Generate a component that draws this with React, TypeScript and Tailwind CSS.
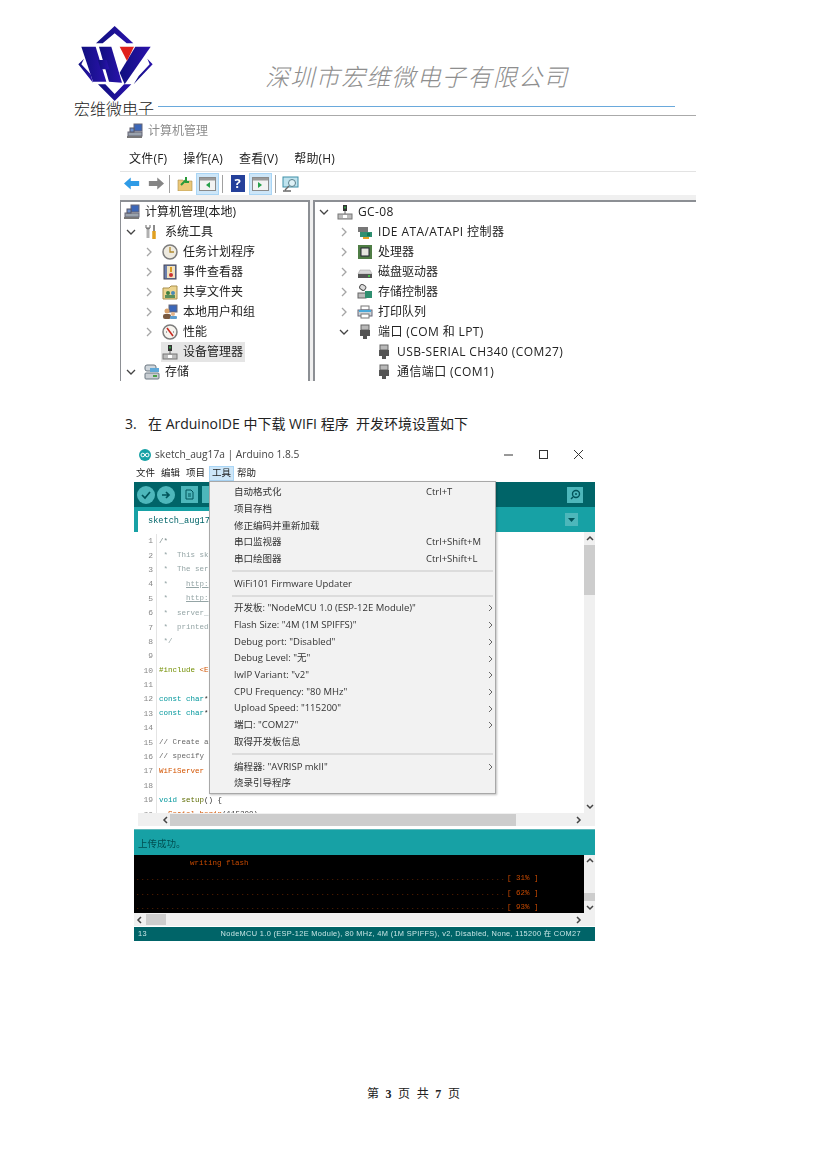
import React from "react";

const cjk = '"Noto Sans CJK SC", "Noto Sans", sans-serif';
const ui = '"Open Sans", "Noto Sans CJK SC", sans-serif';
const mono = '"Liberation Mono", "Noto Sans CJK SC", monospace';

function Logo() {
  return (
    <svg width="75" height="75" viewBox="40 20 225 225" className="block">
      <defs>
        <linearGradient id="lg" x1="0" x2="1" y1="0" y2="0">
          <stop offset="0" stopColor="#10107f" />
          <stop offset="1" stopColor="#2a12ab" />
        </linearGradient>
      </defs>
      <g fill="url(#lg)">
        <polygon points="150,20 206,72 186,72 150,42 114,72 94,72" />
        <polygon points="50,82 93,82 125,187 85,187" />
        <polygon points="103,82 140,82 172,190 133,187" />
        <polygon points="100,122 126,122 134,150 108,150" />
        <polygon points="212,82 258,82 180,195 165,160" />
        <polygon points="58,118 41,135 85,190 78,165 50,135" />
        <polygon points="248,118 264,135 207,195 222,170 255,135" />
        <polygon points="100,195 122,195 150,224 178,195 200,195 150,245" />
      </g>
      <polygon points="165,82 208,82 187,125" fill="#e0201c" />
    </svg>
  );
}

const Chev = ({ open }: { open?: boolean }) => (
  <svg width="10" height="10" viewBox="0 0 10 10" className="shrink-0">
    {open ? (
      <path d="M1 3 L5 7 L9 3" fill="none" stroke="#444" strokeWidth="1.3" />
    ) : (
      <path d="M3 1 L7 5 L3 9" fill="none" stroke="#a6a6a6" strokeWidth="1.3" />
    )}
  </svg>
);

type IconName = "pc" | "tools" | "clock" | "event" | "share" | "users" | "perf" | "dev" | "store" | "ide" | "cpu" | "disk" | "ctrl" | "print" | "port";

function Ico({ n }: { n: IconName }) {
  const p: Record<IconName, React.ReactNode> = {
    pc: (<><rect x="7" y="1" width="8" height="7" fill="#3b66b8" stroke="#667" /><rect x="1" y="9" width="14" height="4" fill="#9aa3ad" stroke="#667" /><rect x="3" y="5" width="4" height="4" fill="#6d8fc9" stroke="#556" /><rect x="0" y="13" width="15" height="2" fill="#777" /></>),
    tools: (<><path d="M4 3 v11" stroke="#b0b0b0" strokeWidth="3" /><path d="M2 1 v3 l2 1 2-1 v-3" stroke="#666" fill="none" /><path d="M10 1 v6" stroke="#8a8a8a" strokeWidth="2" /><path d="M10 7 v8" stroke="#e0a020" strokeWidth="3.5" /></>),
    clock: (<><circle cx="8" cy="8" r="7" fill="#eeeadf" stroke="#7c7c7c" strokeWidth="1.5" /><path d="M8 3 v5 h4" stroke="#b08a30" strokeWidth="1.3" fill="none" /></>),
    event: (<><rect x="2" y="1" width="12" height="14" fill="#6b7fae" stroke="#445" /><rect x="5" y="2" width="8" height="12" fill="#f2e3c0" /><path d="M9 3 v5" stroke="#d89a20" strokeWidth="2" /><circle cx="9" cy="11" r="2" fill="#c33" /></>),
    share: (<><path d="M1 4 h6 l2 -2 h6 v13 h-14 z" fill="#ecd48e" stroke="#a98f4c" /><circle cx="6" cy="9" r="2" fill="#3f7f3f" /><circle cx="11" cy="9" r="2" fill="#4a8ab8" /><rect x="3" y="11" width="10" height="3" fill="#5a8f5a" /></>),
    users: (<><rect x="7" y="1" width="8" height="7" fill="#3b66b8" stroke="#667" /><circle cx="5" cy="7" r="2.5" fill="#d8a26c" /><rect x="1" y="10" width="8" height="5" rx="2" fill="#7a5a40" /><circle cx="11" cy="10" r="2" fill="#e2b48c" /><rect x="8" y="12" width="7" height="3" rx="1" fill="#5d9ed0" /></>),
    perf: (<><circle cx="8" cy="8" r="7" fill="#f5f3ee" stroke="#7c7c7c" strokeWidth="1.5" /><path d="M5 4 L11 12" stroke="#c8281e" strokeWidth="1.6" /><path d="M4 8 h1 M11 8 h1" stroke="#555" /></>),
    dev: (<><rect x="6" y="1" width="4" height="6" fill="#333" /><rect x="7" y="2.5" width="2" height="2" fill="#3a9a4a" /><path d="M8 7 v3" stroke="#666" /><rect x="1" y="10" width="14" height="5" fill="#bdbdbd" stroke="#777" /><rect x="6" y="11" width="4" height="3" fill="#fff" /></>),
    store: (<><rect x="1" y="1" width="11" height="6" rx="2" fill="#cfd6dc" stroke="#6b7680" /><rect x="6" y="4" width="9" height="4" fill="#5fa8d8" /><rect x="1" y="9" width="14" height="6" rx="1" fill="#c9ced3" stroke="#6b7680" /><rect x="9" y="11" width="4" height="2" fill="#4aa04a" /></>),
    ide: (<><rect x="1" y="3" width="10" height="5" fill="#777" /><rect x="3" y="8" width="12" height="5" fill="#2f8f70" /><rect x="10" y="9" width="3" height="3" fill="#175" /><rect x="6" y="13" width="6" height="2" fill="#e6a020" /></>),
    cpu: (<><rect x="1" y="1" width="14" height="14" fill="#4f7d45" /><rect x="4" y="4" width="8" height="8" fill="#e6e6e0" stroke="#223" /></>),
    disk: (<><path d="M3 6 h10 l2 4 h-14 z" fill="#d8d8d8" stroke="#999" strokeWidth=".5" /><rect x="1" y="10" width="14" height="4" fill="#555" /><rect x="11" y="11" width="2" height="2" fill="#4ac04a" /></>),
    ctrl: (<><rect x="3" y="1" width="6" height="5" rx="2" fill="#ddd" stroke="#555" transform="rotate(35 6 3)" /><rect x="1" y="9" width="8" height="5" fill="#bbb" stroke="#666" /><rect x="8" y="7" width="7" height="7" fill="#2f8f70" /></>),
    print: (<><rect x="4" y="2" width="8" height="4" fill="#fff" stroke="#777" /><rect x="1" y="6" width="14" height="6" fill="#cfd4d8" stroke="#667" /><rect x="2" y="6" width="12" height="2" fill="#4aa8d8" /><rect x="4" y="10" width="8" height="4" fill="#fff" stroke="#777" /></>),
    port: (<><rect x="4" y="1" width="8" height="5" fill="#b8b8b8" stroke="#666" /><rect x="3" y="6" width="10" height="6" fill="#555" /><rect x="6" y="12" width="4" height="3" fill="#555" /></>),
  };
  return <svg width="16" height="16" viewBox="0 0 16 16" className="shrink-0">{p[n]}</svg>;
}

function TreeRow({ ind, chev, icon, label, sel, wide, root }: { ind: number; chev?: "o" | "c"; icon: IconName; label: string; sel?: boolean; wide?: boolean; root?: boolean }) {
  return (
    <div className="flex h-[20px] items-center" style={{ paddingLeft: ind }}>
      {!root && <span className="flex w-[12px] shrink-0 items-center justify-center">{chev && <Chev open={chev === "o"} />}</span>}
      <span className={`flex h-[20px] items-center pl-[1px] pr-[2px] ${root ? "" : "ml-[6px]"} ${sel ? "bg-[#e5e5e5]" : ""}`}>
        <Ico n={icon} />
        <span className={`ml-[5px] whitespace-nowrap text-[12px] text-[#222] ${wide ? "tracking-[0.4px]" : ""}`}>{label}</span>
      </span>
    </div>
  );
}

const ToolBtn = ({ children, hot }: { children: React.ReactNode; hot?: boolean }) => (
  <span className={`flex h-[22px] w-[23px] items-center justify-center ${hot ? "border border-[#a9d5f5] bg-[#cde6f8]" : ""}`}>{children}</span>
);
const Sep = () => <span className="mx-[3px] h-[18px] w-px bg-[#a0a0a0]" />;
const Win = ({ mark }: { mark: string }) => (
  <svg width="17" height="16" viewBox="0 0 17 16">
    <rect x=".5" y="1.5" width="16" height="13" fill="#f3f3f3" stroke="#8a8a8a" />
    <rect x="1" y="2" width="15" height="2.5" fill="#9a9a9a" />
    <path d={mark} fill="#27a04a" />
  </svg>
);

function Computer() {
  return (
    <div className="ml-[120px] h-[266px] w-[576px] overflow-hidden border-t border-[#aaaaaa] bg-white blur-[0.4px]" style={{ fontFamily: ui }}>
      <div className="flex h-[30px] items-center pl-[7px]">
        <Ico n="pc" />
        <span className="ml-[5px] text-[12px] text-[#8c8c8c]">计算机管理</span>
      </div>
      <div className="flex h-[25px] items-center gap-[16px] pl-[9px] text-[12px] tracking-[0.2px] text-[#222]">
        <span>文件(F)</span><span>操作(A)</span><span>查看(V)</span><span>帮助(H)</span>
      </div>
      <div className="flex h-[24px] items-center border-t border-[#e3e3e3] pl-[3px]">
        <svg width="16" height="13" viewBox="0 0 19 14" className="ml-[1px]"><path d="M0 7 L8 0 V4 H18 V10 H8 V14 Z" fill="#2f9be6" /></svg>
        <svg width="16" height="13" viewBox="0 0 19 14" className="ml-[8px]"><path d="M19 7 L11 0 V4 H1 V10 H11 V14 Z" fill="#858585" /></svg>
        <span className="ml-[2px] flex items-center"><Sep /></span>
        <ToolBtn>
          <svg width="16" height="14" viewBox="0 0 16 14"><path d="M1 3 h5 l1 1 h8 v10 h-14 z" fill="#ecc878" stroke="#a98f4c" strokeWidth=".6" /><path d="M4 8 L9 3 M9 0 V5 H12" stroke="#2a9a3a" strokeWidth="2" fill="none" /></svg>
        </ToolBtn>
        <ToolBtn hot><Win mark="M11 6 V12 L7 9 Z" /></ToolBtn>
        <Sep />
        <ToolBtn>
          <span className="flex h-[17px] w-[14px] items-center justify-center bg-[#24409a] text-[13px] font-bold leading-none text-white">?</span>
        </ToolBtn>
        <ToolBtn hot><Win mark="M6 6 V12 L10 9 Z" /></ToolBtn>
        <Sep />
        <ToolBtn>
          <svg width="17" height="16" viewBox="0 0 17 16"><rect x="1" y="1" width="15" height="10" fill="#bfe3ee" stroke="#3f8fa8" /><circle cx="10" cy="7" r="3.5" fill="#dff2f7" stroke="#5b7f8a" /><path d="M7 10 L3 14 M1 15 H9" stroke="#6a6a6a" strokeWidth="1.4" /></svg>
        </ToolBtn>
      </div>
      <div className="h-[5px] bg-[#f0f0f0]" />
      <div className="flex h-[181px] bg-[#f0f0f0]">
        <div className="-ml-[1px] h-[190px] w-[191px] border-2 border-[#8c8f94] bg-white">
          <TreeRow ind={2} root icon="pc" label="计算机管理(本地)" />
          <TreeRow ind={4} chev="o" icon="tools" label="系统工具" />
          <TreeRow ind={22} chev="c" icon="clock" label="任务计划程序" />
          <TreeRow ind={22} chev="c" icon="event" label="事件查看器" />
          <TreeRow ind={22} chev="c" icon="share" label="共享文件夹" />
          <TreeRow ind={22} chev="c" icon="users" label="本地用户和组" />
          <TreeRow ind={22} chev="c" icon="perf" label="性能" />
          <TreeRow ind={22} icon="dev" label="设备管理器" sel />
          <TreeRow ind={4} chev="o" icon="store" label="存储" />
        </div>
        <div className="ml-[3px] h-[190px] flex-1 border-t-2 border-l-2 border-[#8c8f94] bg-white">
          <TreeRow ind={3} chev="o" icon="dev" label="GC-08" wide />
          <TreeRow ind={23} chev="c" icon="ide" label="IDE ATA/ATAPI 控制器" wide />
          <TreeRow ind={23} chev="c" icon="cpu" label="处理器" />
          <TreeRow ind={23} chev="c" icon="disk" label="磁盘驱动器" />
          <TreeRow ind={23} chev="c" icon="ctrl" label="存储控制器" />
          <TreeRow ind={23} chev="c" icon="print" label="打印队列" />
          <TreeRow ind={23} chev="o" icon="port" label="端口 (COM 和 LPT)" wide />
          <TreeRow ind={42} icon="port" label="USB-SERIAL CH340 (COM27)" wide />
          <TreeRow ind={42} icon="port" label="通信端口 (COM1)" wide />
        </div>
      </div>
    </div>
  );
}

const code: [string, React.ReactNode][] = [
  ["1", <span className="text-[#7a8a8a]">{"/*"}</span>],
  ["2", <span className="text-[#95a5a6]">{" *  This sk"}</span>],
  ["3", <span className="text-[#95a5a6]">{" *  The ser"}</span>],
  ["4", <span className="text-[#95a5a6]">{" *    "}<u>http:</u></span>],
  ["5", <span className="text-[#95a5a6]">{" *    "}<u>http:</u></span>],
  ["6", <span className="text-[#95a5a6]">{" *  server_"}</span>],
  ["7", <span className="text-[#95a5a6]">{" *  printed"}</span>],
  ["8", <span className="text-[#95a5a6]">{" */"}</span>],
  ["9", ""],
  ["10", <span className="text-[#728e00]">#include <span className="text-[#d35400]">&lt;E</span></span>],
  ["11", ""],
  ["12", <span className="text-[#00979c]">const char<span className="text-[#333]">*</span></span>],
  ["13", <span className="text-[#00979c]">const char<span className="text-[#333]">*</span></span>],
  ["14", ""],
  ["15", <span className="text-[#666]">{"// Create a"}</span>],
  ["16", <span className="text-[#666]">{"// specify "}</span>],
  ["17", <span className="text-[#d35400]">WiFiServer</span>],
  ["18", ""],
  ["19", <span className="text-[#00979c]">{"void "}<span className="text-[#5e6d03]">setup</span><span className="text-[#333]">{"() {"}</span></span>],
  ["20", <span className="text-[#d35400]">{"  Serial.begin"}<span className="text-[#333]">(115200)</span></span>],
];

const menu: ({ t: string; k?: string; a?: boolean } | "sep")[] = [
  { t: "自动格式化", k: "Ctrl+T" },
  { t: "项目存档" },
  { t: "修正编码并重新加载" },
  { t: "串口监视器", k: "Ctrl+Shift+M" },
  { t: "串口绘图器", k: "Ctrl+Shift+L" },
  "sep",
  { t: "WiFi101 Firmware Updater" },
  "sep",
  { t: '开发板: "NodeMCU 1.0 (ESP-12E Module)"', a: true },
  { t: 'Flash Size: "4M (1M SPIFFS)"', a: true },
  { t: 'Debug port: "Disabled"', a: true },
  { t: 'Debug Level: "无"', a: true },
  { t: 'lwIP Variant: "v2"', a: true },
  { t: 'CPU Frequency: "80 MHz"', a: true },
  { t: 'Upload Speed: "115200"', a: true },
  { t: '端口: "COM27"', a: true },
  { t: "取得开发板信息" },
  "sep",
  { t: '编程器: "AVRISP mkII"', a: true },
  { t: "烧录引导程序" },
];

function ToolsMenu() {
  return (
    <div className="absolute left-[75px] top-[35px] h-[313px] w-[287px] border border-[#a8a8a8] bg-[#f2f2f2] pl-[23px] pt-[2px] text-[9.5px] text-[#333] shadow-[1px_1px_2px_rgba(0,0,0,0.25)]">
      {menu.map((m, i) =>
        m === "sep" ? (
          <div key={i} className="-ml-[1px] my-[3px] mr-[2px] h-[2px] bg-[#dcdcdc]" />
        ) : (
          <div key={i} className="flex h-[16.7px] items-center pl-[1px]">
            <span className="whitespace-nowrap">{m.t}</span>
            {m.k && <span className="absolute left-[216px] whitespace-nowrap">{m.k}</span>}
            {m.a && (
              <svg width="6" height="8" viewBox="0 0 6 8" className="absolute left-[278px]"><path d="M1 1 L4 4 L1 7" fill="none" stroke="#666" strokeWidth="1" /></svg>
            )}
          </div>
        )
      )}
    </div>
  );
}

const ScrollArrow = ({ d }: { d: "u" | "d" | "l" | "r" }) => {
  const path = { u: "M1 5 L4 2 L7 5", d: "M1 3 L4 6 L7 3", l: "M5 1 L2 4 L5 7", r: "M3 1 L6 4 L3 7" }[d];
  return <svg width="8" height="8" viewBox="0 0 8 8" className="shrink-0"><path d={path} fill="none" stroke="#444" strokeWidth="1.5" /></svg>;
};

function Arduino() {
  return (
    <div className="relative ml-[134px] h-[495px] w-[461px] bg-white blur-[0.4px]" style={{ fontFamily: ui }}>
      <div className="flex h-[18px] items-center pl-[5px]">
        <svg width="12" height="12" viewBox="0 0 12 12"><circle cx="6" cy="6" r="6" fill="#17a1a5" /><circle cx="3.8" cy="6" r="1.8" fill="none" stroke="#fff" /><circle cx="8.2" cy="6" r="1.8" fill="none" stroke="#fff" /></svg>
        <span className="ml-[4px] text-[10.2px] text-[#444]">sketch_aug17a | Arduino 1.8.5</span>
        <svg width="80" height="12" viewBox="0 0 80 12" className="ml-auto mr-[11px]"><path d="M0 6 H9" stroke="#333" /><rect x="35.5" y="1.5" width="8" height="8" fill="none" stroke="#333" /><path d="M70 1 L79 10 M79 1 L70 10" stroke="#333" /></svg>
      </div>
      <div className="flex h-[18px] items-center pl-[2px] text-[9.5px] text-[#222]">
        <span className="w-[25px]">文件</span>
        <span className="w-[25px]">编辑</span>
        <span className="w-[23px]">项目</span>
        <span className="flex h-[15px] w-[25px] items-center justify-center border border-[#a9d5f5] bg-[#cde6f8]">工具</span>
        <span className="ml-[3px]">帮助</span>
      </div>
      <div className="flex h-[25px] items-center bg-[#006468] pl-[3px]">
        <span className="flex h-[18px] w-[18px] items-center justify-center rounded-full bg-[#4db7bb]"><svg width="10" height="10" viewBox="0 0 10 10"><path d="M1 5 L4 8 L9 2" fill="none" stroke="#00545a" strokeWidth="1.7" /></svg></span>
        <span className="ml-[2px] flex h-[18px] w-[18px] items-center justify-center rounded-full bg-[#4db7bb]"><svg width="10" height="10" viewBox="0 0 10 10"><path d="M1 5 H8 M5 2 L8 5 L5 8" fill="none" stroke="#00545a" strokeWidth="1.7" /></svg></span>
        <span className="ml-[6px] flex h-[17px] w-[17px] items-center justify-center bg-[#4db7bb]"><svg width="9" height="11" viewBox="0 0 9 11"><path d="M1 1 H6 L8 3 V10 H1 Z M3 5 H6 M3 7 H6" fill="none" stroke="#00545a" /></svg></span>
        <span className="ml-[4px] h-[17px] w-[17px] bg-[#4db7bb]" />
        <span className="ml-auto mr-[12px] flex h-[16px] w-[16px] items-center justify-center bg-[#4db7bb]"><svg width="11" height="11" viewBox="0 0 11 11"><circle cx="6" cy="5" r="3.5" fill="none" stroke="#00545a" strokeWidth="1.4" /><circle cx="6" cy="5" r="1" fill="#00545a" /><path d="M3 8 L1 10" stroke="#00545a" strokeWidth="1.4" /></svg></span>
      </div>
      <div className="flex h-[25px] items-end bg-[#17a1a5] pl-[4px]">
        <div className="flex h-[21px] w-[85px] items-center bg-white pl-[10px] text-[8.6px] text-[#006468]" style={{ fontFamily: mono }}>sketch_aug17a</div>
        <span className="mb-[6px] ml-auto mr-[17px] flex h-[13px] w-[13px] items-center justify-center bg-[#4db7bb]"><svg width="7" height="4" viewBox="0 0 7 4"><path d="M0 0 H7 L3.5 4 Z" fill="#00545a" /></svg></span>
      </div>
      <div className="flex h-[281px] overflow-hidden">
        <div className="flex-1 overflow-hidden pt-[2px]" style={{ fontFamily: mono }}>
          {code.map(([n, c]) => (
            <div key={n} className="flex h-[14.4px] items-center text-[7.5px]">
              <span className="w-[19px] shrink-0 text-right text-[8px] text-[#888]">{n}</span>
              <span className="ml-[3px] h-[14.4px] w-px shrink-0 bg-[#e4e4e4]" />
              <span className="ml-[2px] whitespace-pre">{c}</span>
            </div>
          ))}
        </div>
        <div className="flex w-[11px] flex-col items-center bg-[#f0f0f0] pt-[3px]">
          <ScrollArrow d="u" />
          <div className="mt-[2px] h-[50px] w-[11px] bg-[#cdcdcd]" />
          <div className="mt-auto mb-[3px]"><ScrollArrow d="d" /></div>
        </div>
      </div>
      <div className="ml-[4px] flex h-[13px] items-center bg-[#f0f0f0] pl-[24px] pr-[13px]">
        <ScrollArrow d="l" />
        <div className="h-[12px] w-[346px] bg-[#cdcdcd]" />
        <span className="ml-auto"><ScrollArrow d="r" /></span>
      </div>
      <div className="mt-[3px] flex h-[26px] items-center border-t border-[#5fb8ba] bg-[#17a1a5] pl-[4px] pt-[3px] text-[9.5px] text-[#004f52]">上传成功。</div>
      <div className="flex h-[58px]">
        <div className="w-[450px] overflow-hidden bg-black pt-[1px] text-[7.5px] text-[#c84a00]" style={{ fontFamily: mono }}>
          <div className="h-[14px] whitespace-pre pl-[56px] leading-[14px]">writing flash</div>
          {["31", "62", "93"].map((v) => (
            <div key={v} className="flex h-[14.4px] items-end pl-[2px]">
              <span className="w-[371px] overflow-hidden whitespace-nowrap text-[6px] leading-[10px] tracking-[1.4px] text-[#a83c00]">{".".repeat(74)}</span>
              <span className="whitespace-pre">{`[ ${v}% ]`}</span>
            </div>
          ))}
        </div>
        <div className="flex w-[11px] flex-col items-center bg-[#f0f0f0] pt-[2px]">
          <ScrollArrow d="u" />
          <div className="mt-[28px] h-[8px] w-[11px] bg-[#cdcdcd]" />
          <div className="mt-auto mb-[2px]"><ScrollArrow d="d" /></div>
        </div>
      </div>
      <div className="flex h-[13px] items-center bg-[#f0f0f0] pl-[2px] pr-[13px]">
        <ScrollArrow d="l" />
        <div className="ml-[2px] h-[11px] w-[20px] bg-[#cdcdcd]" />
        <span className="ml-auto"><ScrollArrow d="r" /></span>
      </div>
      <div className="mt-[1px] flex h-[14px] items-center justify-between bg-[#006468] pl-[4px] pr-[14px] text-[7.4px] tracking-[0.33px] text-[#c8e6e6]" style={{ fontFamily: '"Liberation Sans", "Noto Sans CJK SC", sans-serif' }}>
        <span>13</span>
        <span className="whitespace-nowrap">NodeMCU 1.0 (ESP-12E Module), 80 MHz, 4M (1M SPIFFS), v2, Disabled, None, 115200 在 COM27</span>
      </div>
      <ToolsMenu />
    </div>
  );
}

export default function App() {
  return (
    <div className="h-[1169px] w-[827px] overflow-hidden bg-white" style={{ fontFamily: cjk }}>
      <header className="flex h-[115px] pl-[74px]">
        <div className="w-[84px] pt-[26px]">
          <div className="ml-[4px]"><Logo /></div>
          <div className="-mt-[1px] whitespace-nowrap text-[16px] font-light leading-[16px] text-[#222]">宏维微电子</div>
        </div>
        <div className="pt-[61px]">
          <div className="ml-[107px] h-[29px] whitespace-nowrap text-[24px] font-light italic leading-[29px] tracking-[1.3px] text-[#8e8e8e]">深圳市宏维微电子有限公司</div>
          <div className="mt-[16px] h-px w-[517px] bg-[#6aa9dc]" />
        </div>
      </header>
      <Computer />
      <p className="ml-[125px] mt-[33px] h-[20px] whitespace-pre text-[14px] leading-[20px] text-[#222]" style={{ fontFamily: '"Open Sans", "Noto Sans CJK SC", sans-serif' }}>
        <span className="inline-block w-[23px]">3.</span>{"在 ArduinoIDE 中下载 WIFI 程序  开发环境设置如下"}
      </p>
      <div className="mt-[12px]"><Arduino /></div>
      <footer className="mt-[145px] flex justify-center whitespace-pre text-[12px] leading-[16px] tracking-[0.2px] text-[#222]" style={{ fontFamily: '"Liberation Serif", "Noto Sans CJK SC", serif' }}>
        <span>{"第  "}</span><b>3</b><span>{"  页  共  "}</span><b>7</b><span>{"  页"}</span>
      </footer>
    </div>
  );
}
